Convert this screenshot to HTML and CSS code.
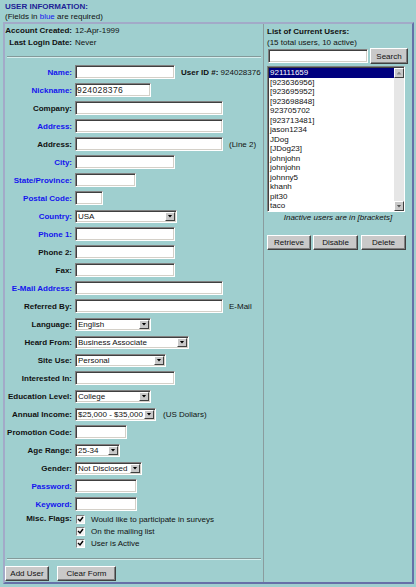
FILE: index.html
```html
<!DOCTYPE html>
<html>
<head>
<meta charset="utf-8">
<title>User Information</title>
<link rel="stylesheet" href="styles.css">
</head>
<body>
<div class="page-head">
  <div class="title">USER INFORMATION:</div>
  <div class="note">(Fields in <span class="req">blue</span> are required)</div>
</div>
<div class="panel">
  <div class="left">
    <div class="info">
      <div class="irow"><span class="lbl">Account Created:</span><span>12-Apr-1999</span></div>
      <div class="irow"><span class="lbl">Last Login Date:</span><span>Never</span></div>
    </div>
    <div class="rule"></div>
    <div class="form">
      <div class="row"><span class="lbl req">Name:</span><span class="field w100"></span><span class="aside"><b>User ID #:</b> 924028376</span></div>
      <div class="row"><span class="lbl req">Nickname:</span><span class="field w76">924028376</span></div>
      <div class="row"><span class="lbl">Company:</span><span class="field w148"></span></div>
      <div class="row"><span class="lbl req">Address:</span><span class="field w148"></span></div>
      <div class="row"><span class="lbl">Address:</span><span class="field w148"></span><span class="aside">(Line 2)</span></div>
      <div class="row"><span class="lbl req">City:</span><span class="field w100"></span></div>
      <div class="row"><span class="lbl req">State/Province:</span><span class="field w61"></span></div>
      <div class="row"><span class="lbl req">Postal Code:</span><span class="field w28"></span></div>
      <div class="row"><span class="lbl req">Country:</span><span class="select w102"><span class="val">USA</span><span class="arrow"></span></span></div>
      <div class="row"><span class="lbl req">Phone 1:</span><span class="field w100"></span></div>
      <div class="row"><span class="lbl">Phone 2:</span><span class="field w100"></span></div>
      <div class="row"><span class="lbl">Fax:</span><span class="field w100"></span></div>
      <div class="row"><span class="lbl req">E-Mail Address:</span><span class="field w148"></span></div>
      <div class="row"><span class="lbl">Referred By:</span><span class="field w148"></span><span class="aside">E-Mail</span></div>
      <div class="row"><span class="lbl">Language:</span><span class="select w76"><span class="val">English</span><span class="arrow"></span></span></div>
      <div class="row"><span class="lbl">Heard From:</span><span class="select w114"><span class="val">Business Associate</span><span class="arrow"></span></span></div>
      <div class="row"><span class="lbl">Site Use:</span><span class="select w91"><span class="val">Personal</span><span class="arrow"></span></span></div>
      <div class="row"><span class="lbl">Interested In:</span><span class="field w100"></span></div>
      <div class="row"><span class="lbl">Education Level:</span><span class="select w76"><span class="val">College</span><span class="arrow"></span></span></div>
      <div class="row"><span class="lbl">Annual Income:</span><span class="select w81"><span class="val">$25,000 - $35,000</span><span class="arrow"></span></span><span class="aside wide">(US Dollars)</span></div>
      <div class="row"><span class="lbl">Promotion Code:</span><span class="field w52"></span></div>
      <div class="row"><span class="lbl">Age Range:</span><span class="select w45"><span class="val">25-34</span><span class="arrow"></span></span></div>
      <div class="row"><span class="lbl">Gender:</span><span class="select w67"><span class="val">Not Disclosed</span><span class="arrow"></span></span></div>
      <div class="row"><span class="lbl req">Password:</span><span class="field w62"></span></div>
      <div class="row"><span class="lbl req">Keyword:</span><span class="field w62"></span></div>
      <div class="misc">
        <span class="lbl">Misc. Flags:</span>
        <div class="checks">
          <div class="check"><span class="cb"><svg width="7" height="7" viewBox="0 0 7 7"><path d="M1 3 L3 5 L6 1" fill="none" stroke="#000" stroke-width="1.4"/></svg></span><span class="ctext">Would like to participate in surveys</span></div>
          <div class="check"><span class="cb"><svg width="7" height="7" viewBox="0 0 7 7"><path d="M1 3 L3 5 L6 1" fill="none" stroke="#000" stroke-width="1.4"/></svg></span><span class="ctext">On the mailing list</span></div>
          <div class="check"><span class="cb"><svg width="7" height="7" viewBox="0 0 7 7"><path d="M1 3 L3 5 L6 1" fill="none" stroke="#000" stroke-width="1.4"/></svg></span><span class="ctext">User is Active</span></div>
        </div>
      </div>
    </div>
    <div class="rule rule-bottom"></div>
    <div class="btnrow">
      <button class="btn b-add">Add User</button>
      <button class="btn b-clear">Clear Form</button>
    </div>
  </div>
  <div class="right">
    <div class="list-title">List of Current Users:</div>
    <div class="list-sub">(15 total users, 10 active)</div>
    <div class="search-row">
      <span class="field w100 search-field"></span>
      <button class="btn b-search">Search</button>
    </div>
    <div class="listbox">
      <div class="items">
        <div class="item sel">921111659</div>
        <div class="item">[923636956]</div>
        <div class="item">[923695952]</div>
        <div class="item">[923698848]</div>
        <div class="item">923705702</div>
        <div class="item">[923713481]</div>
        <div class="item">jason1234</div>
        <div class="item">JDog</div>
        <div class="item">[JDog23]</div>
        <div class="item">johnjohn</div>
        <div class="item">johnjohn</div>
        <div class="item">johnny5</div>
        <div class="item">khanh</div>
        <div class="item">pit30</div>
        <div class="item">taco</div>
      </div>
      <div class="sbar">
        <span class="sbtn up"></span>
        <span class="strack"></span>
        <span class="sbtn down"></span>
      </div>
    </div>
    <div class="legend">Inactive users are in [brackets]</div>
    <div class="rbtns">
      <button class="btn b-ret">Retrieve</button>
      <button class="btn b-dis">Disable</button>
      <button class="btn b-del">Delete</button>
    </div>
  </div>
</div>
</body>
</html>
```

FILE: styles.css
```css
* { box-sizing: border-box; }
html, body { margin: 0; padding: 0; }
body {
  width: 416px;
  height: 587px;
  overflow: hidden;
  background: #9fcfcf;
  font-family: "Liberation Sans", Arial, sans-serif;
  font-size: 8px;
  color: #111;
}
.page-head { height: 22px; padding: 2px 0 0 5px; line-height: 9.5px; white-space: nowrap; }
.title { font-weight: bold; color: #1e1e96; }
.req { color: #1414ee; }

.panel {
  margin-left: 3px;
  width: 411px;
  border: 2px solid;
  border-color: #a2aac8 #6670a8 #6670a8 #a2aac8;
  display: flex;
}
.left { width: 259px; border-right: 1px solid #8a9c9e; padding: 1px 0 1px 1px; }
.right { flex: 1; padding: 2px 0 0 3px; white-space: nowrap; }

.lbl {
  width: 66px;
  margin-right: 3px;
  display: flex;
  justify-content: flex-end;
  white-space: nowrap;
  font-weight: bold;
  flex: none;
}
.irow { display: flex; line-height: 12px; white-space: nowrap; }

.rule {
  margin: 7px 2px 5px 1px;
  border-top: 1px solid #849a9a;
  border-bottom: 1px solid #d6eeee;
}
.rule-bottom { margin: 9px 2px 6px 1px; }

.row { display: flex; align-items: center; height: 18px; }
.aside { margin-left: 6px; white-space: nowrap; }
.aside.wide { margin-left: 7px; }

.field {
  display: block;
  flex: none;
  height: 14px;
  background: #fff;
  border: 1px solid;
  border-color: #808080 #fff #fff #808080;
  box-shadow: inset 1px 1px 0 #404040, inset -1px -1px 0 #d4d0c8;
  font-size: 8.5px;
  letter-spacing: 0.4px;
  line-height: 12px;
  padding-left: 1px;
  color: #222;
}
.select {
  display: flex;
  flex: none;
  height: 13px;
  background: #fff;
  border: 1px solid;
  border-color: #808080 #fff #fff #808080;
  box-shadow: inset 1px 1px 0 #404040, inset -1px -1px 0 #d4d0c8;
}
.select .val { flex: 1; padding-left: 2px; line-height: 11px; white-space: nowrap; overflow: hidden; }
.select .arrow {
  width: 10px;
  margin: 1px;
  background: #c8c8c8;
  border: 1px solid;
  border-color: #fff #404040 #404040 #fff;
  display: flex;
  align-items: center;
  justify-content: center;
}
.select .arrow::after {
  content: "";
  width: 5px;
  height: 3px;
  background: #000;
  clip-path: polygon(0 0, 100% 0, 50% 100%);
}

.w28 { width: 28px; }
.w45 { width: 45px; }
.w52 { width: 52px; }
.w61 { width: 61px; }
.w62 { width: 62px; }
.w67 { width: 67px; }
.w76 { width: 76px; }
.w81 { width: 81px; }
.w91 { width: 91px; }
.w100 { width: 100px; }
.w102 { width: 102px; }
.w114 { width: 114px; }
.w148 { width: 148px; }

.misc { display: flex; }
.misc .lbl { line-height: 12px; height: 12px; }
.check { display: flex; align-items: center; height: 12px; }
.cb {
  width: 9px;
  height: 9px;
  margin-left: 1px;
  background: #f2f2f2;
  border: 1px solid;
  border-color: #808080 #fff #fff #808080;
  display: flex;
  align-items: center;
  justify-content: center;
}
.ctext { margin-left: 6px; white-space: nowrap; }

.btn {
  font: 8px "Liberation Sans", Arial, sans-serif;
  color: #111;
  height: 15px;
  padding: 0;
  background: #c9c9c9;
  border: 1px solid;
  border-color: #fff #404040 #404040 #fff;
  box-shadow: inset -1px -1px 0 #808080;
  display: flex;
  align-items: center;
  justify-content: center;
  white-space: nowrap;
}
.btnrow { display: flex; gap: 8px; margin-left: -1px; }
.b-add { width: 44px; }
.b-clear { width: 59px; }

.list-title { font-weight: bold; line-height: 11px; }
.list-sub { line-height: 11px; }
.search-row { display: flex; align-items: center; height: 16px; }
.search-field { margin-left: 1px; }
.b-search { width: 38px; height: 16px; margin-left: 2px; }

.listbox {
  margin-top: 2px;
  width: 138px;
  height: 146px;
  display: flex;
  background: #fff;
  border: 1px solid;
  border-color: #808080 #fff #fff #808080;
  box-shadow: inset 1px 1px 0 #404040;
  padding: 1px 0 0 1px;
  overflow: hidden;
}
.items { flex: 1; }
.item { line-height: 9.5px; padding-left: 1px; white-space: nowrap; color: #111; }
.item.sel { background: #00007e; color: #fff; }
.sbar { width: 10px; display: flex; flex-direction: column; background: #e6e6e6; }
.strack { flex: 1; }
.sbtn {
  height: 10px;
  background: #c8c8c8;
  border: 1px solid;
  border-color: #fff #404040 #404040 #fff;
  display: flex;
  align-items: center;
  justify-content: center;
}
.sbtn::after {
  content: "";
  width: 5px;
  height: 3px;
}
.sbtn.up::after { background: #8a8a8a; clip-path: polygon(50% 0, 100% 100%, 0 100%); }
.sbtn.down::after { background: #555; clip-path: polygon(0 0, 100% 0, 50% 100%); }

.legend { font-style: italic; text-align: center; line-height: 10px; margin-top: 1px; padding-right: 3px; }
.rbtns { display: flex; margin-top: 12px; }
.b-ret { width: 44px; }
.b-dis { width: 45px; margin-left: 2px; }
.b-del { width: 45px; margin-left: 3px; }
```
